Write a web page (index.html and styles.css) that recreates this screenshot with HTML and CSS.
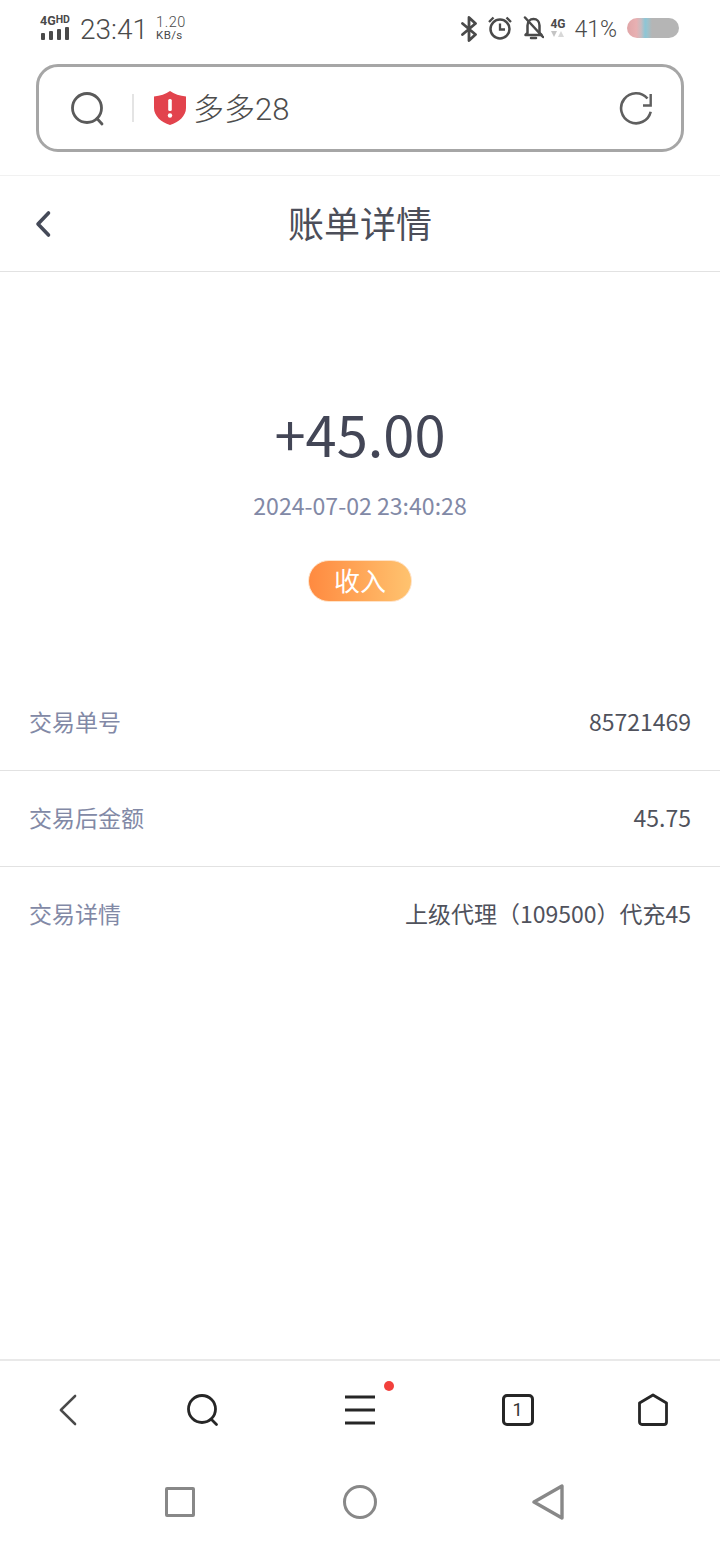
FILE: index.html
```html
<!DOCTYPE html>
<html lang="zh-CN">
<head>
    <meta charset="UTF-8">
    <meta name="viewport" content="width=device-width, initial-scale=1.0">
    <title>账单详情</title>
    <link rel="stylesheet" href="styles.css">
</head>
<body>
    <div class="phone">
        <!-- system status bar -->
        <div class="status-bar">
            <div class="signal">
                <div class="signal-type">4G<span>HD</span></div>
                <div class="signal-bars"><i class="b1"></i><i class="b2"></i><i class="b3"></i><i class="b4"></i></div>
            </div>
            <div class="clock">23:41</div>
            <div class="speed"><span>1.20</span><span class="speed-unit">KB/s</span></div>
            <div class="status-right">
                <svg class="ic-bt" width="18" height="26" viewBox="0 0 18 26" fill="none" stroke="#4a4a4a" stroke-width="2.800" stroke-linejoin="round" stroke-linecap="round"><path d="M2.500 7.500 15.500 18.500 9 24.500V1.500l6.500 6L2.500 18.500"/></svg>
                <svg class="ic-alarm" width="24" height="24" viewBox="0 0 24 24" fill="none" stroke="#4a4a4a" stroke-width="2.500"><circle cx="12" cy="13" r="9.500"/><path d="M12 7.500V13.500H17" stroke-width="2.300"/><path d="M1 6 5.500 1.500M23 6 18.500 1.500" stroke-width="2.300"/></svg>
                <svg class="ic-bell" width="21" height="24" viewBox="0 0 21 24" fill="none" stroke="#4a4a4a" stroke-width="2.500" stroke-linejoin="round"><path d="M4.500 17V9.500C4.500 5.500 7 3 10.500 3s6 2.500 6 6.500V17l2 2H2.500z"/><path d="M8 22h5" stroke-linecap="round"/><path d="M2 1.500 20 21" stroke-linecap="round"/></svg>
                <div class="net">
                    <div class="net-type">4G</div>
                    <svg width="13" height="7" viewBox="0 0 13 7"><path d="M0 0h6L3 6z" fill="#c4c4c4"/><path d="M7 6h6l-3-6z" fill="#d8d8d8"/></svg>
                </div>
                <div class="battery-text">41%</div>
                <div class="battery"></div>
            </div>
        </div>

        <!-- browser address bar -->
        <div class="address-wrap">
            <div class="address">
                <svg class="addr-search" width="34" height="34" viewBox="0 0 34 34" fill="none" stroke="#5a5a5a" stroke-width="2.800" stroke-linecap="round"><circle cx="16" cy="16" r="14.500"/><path d="M26 26.500 31 32"/></svg>
                <div class="addr-sep"></div>
                <svg class="addr-shield" width="32" height="34" viewBox="0 0 32 34"><path d="M16 0 C20 3 26 5 32 5.500V17C32 25 25 31 16 34 7 31 0 25 0 17V5.500C6 5 12 3 16 0z" fill="#e2434d"/><rect x="14.200" y="8" width="3.600" height="12" rx="1.500" fill="#fff"/><circle cx="16" cy="24.500" r="2.200" fill="#fff"/></svg>
                <div class="addr-text">多多28</div>
                <svg class="addr-refresh" width="34" height="34" viewBox="0 0 34 34" fill="none" stroke="#5f5f5f" stroke-width="2.600"><path d="M32.700 20.700A15 15 0 1 1 29.500 7.500"/><path d="M32.700 3V14.500H25" stroke-width="2.400"/></svg>
            </div>
        </div>

        <!-- page header -->
        <div class="page-head">
            <svg class="head-back" width="20" height="30" viewBox="0 0 20 30" fill="none" stroke="#454a58" stroke-width="3.600" stroke-linecap="round" stroke-linejoin="round"><path d="M16.500 4 6 15l10.500 11"/></svg>
            <h1 class="head-title">账单详情</h1>
        </div>

        <div class="summary">
            <div class="amount">+45.00</div>
            <div class="date">2024-07-02 23:40:28</div>
            <div class="tag">收入</div>
        </div>

        <div class="details">
            <div class="row"><span class="row-label">交易单号</span><span class="row-value">85721469</span></div>
            <div class="row"><span class="row-label">交易后金额</span><span class="row-value">45.75</span></div>
            <div class="row"><span class="row-label">交易详情</span><span class="row-value">上级代理（109500）代充45</span></div>
        </div>

        <!-- browser toolbar -->
        <div class="toolbar">
            <div class="tool">
                <svg width="22" height="32" viewBox="0 0 22 32" fill="none" stroke="#4a4a4a" stroke-width="2.600" stroke-linecap="round" stroke-linejoin="round"><path d="M18 2 3 16l15 14" transform="translate(1 0) scale(.95 1)"/></svg>
            </div>
            <div class="tool">
                <svg width="34" height="34" viewBox="0 0 34 34" fill="none" stroke="#262626" stroke-width="2.800" stroke-linecap="round"><circle cx="16" cy="16" r="13.500"/><path d="M25.500 26.500 30.500 31.500"/></svg>
            </div>
            <div class="tool tool-menu">
                <svg width="32" height="30" viewBox="0 0 32 30" fill="none" stroke="#262626" stroke-width="2.800"><path d="M1 2h30M1 15h30M1 28h30"/></svg>
                <span class="dot"></span>
            </div>
            <div class="tool">
                <div class="tab-count">1</div>
            </div>
            <div class="tool">
                <svg width="32" height="34" viewBox="0 0 32 34" fill="none" stroke="#262626" stroke-width="2.800" stroke-linejoin="round"><path d="M16 2 29.500 10V29a2.500 2.500 0 0 1-2.500 2.500H5A2.500 2.500 0 0 1 2.500 29V10z"/></svg>
            </div>
        </div>

        <!-- system navigation -->
        <div class="sys-nav">
            <div class="sys-btn"><div class="sys-square"></div></div>
            <div class="sys-btn"><div class="sys-circle"></div></div>
            <div class="sys-btn">
                <svg width="32" height="36" viewBox="0 0 32 36" fill="none" stroke="#888" stroke-width="3.400" stroke-linejoin="round"><path d="M2 18 30 2V34z"/></svg>
            </div>
        </div>
    </div>
</body>
</html>
```

FILE: styles.css
```css
* {
    box-sizing: border-box;
}

body {
    margin: 0;
    padding: 0;
    background-color: #fff;
    font-family: "Noto Sans CJK SC", "Noto Sans", sans-serif;
}

.phone {
    width: 720px;
    height: 1544px;
    display: flex;
    flex-direction: column;
    overflow: hidden;
    background-color: #fff;
}

/* status bar */
.status-bar {
    height: 64px;
    padding: 12px 41px 0 41px;
    display: flex;
    align-items: flex-start;
    color: #4a4a4a;
    font-family: Roboto, sans-serif;
}

.signal {
    width: 30px;
    height: 26px;
    margin-top: 2px;
}

.signal-type {
    font-size: 12.500px;
    line-height: 12px;
    font-weight: 700;
    white-space: nowrap;
    margin-left: -1px;
}

.signal-type span {
    font-size: 10.500px;
    vertical-align: 2px;
}

.signal-bars {
    display: flex;
    align-items: flex-end;
    gap: 4px;
    height: 13px;
}

.signal-bars i {
    display: block;
    width: 4px;
    border-radius: 1px;
    background-color: #4a4a4a;
}

.b1 { height: 7px; }
.b2 { height: 9px; }
.b3 { height: 11px; }
.b4 { height: 13px; }

.clock {
    margin-left: 9px;
    font-size: 28px;
    line-height: 36px;
    font-weight: 300;
}

.speed {
    margin-left: 8px;
    margin-top: 4px;
    display: flex;
    flex-direction: column;
    font-size: 14.500px;
    line-height: 14px;
    letter-spacing: .6px;
    font-weight: 300;
}

.speed-unit {
    font-size: 11.500px;
    line-height: 11px;
    letter-spacing: .4px;
    font-weight: 400;
}

.status-right {
    margin-left: auto;
    display: flex;
    align-items: center;
    height: 34px;
}

.ic-alarm {
    margin-left: 10px;
    margin-top: -3px;
}

.ic-bell {
    margin-left: 11px;
    margin-top: -2px;
}

.net {
    margin-left: 5px;
    width: 17px;
    display: flex;
    flex-direction: column;
    align-items: center;
    margin-top: -4px;
}

.net-type {
    font-size: 12px;
    line-height: 14px;
    font-weight: 700;
}

.battery-text {
    margin-left: 8px;
    margin-top: 2px;
    font-size: 23px;
    line-height: 34px;
    font-weight: 300;
}

.battery {
    margin-left: 10px;
    width: 52px;
    height: 20px;
    margin-top: -2px;
    border-radius: 10px;
    background: linear-gradient(90deg, #e0a6a8 0%, #e8b0b2 18%, #c9bcc0 27%, #8cc6d6 35%, #9cc2cc 40%, #b5b5b5 48%, #b5b5b5 100%);
}

/* address bar */
.address-wrap {
    height: 112px;
    padding: 0 36px;
    border-bottom: 1px solid #f1f1f1;
}

.address {
    height: 88px;
    padding: 0 29px 0 32px;
    display: flex;
    align-items: center;
    border: 3px solid #a6a6a6;
    border-radius: 22px;
}

.addr-search {
    margin-top: 2px;
}

.addr-sep {
    width: 2px;
    height: 28px;
    margin-left: 27px;
    background-color: #e4e4e4;
}

.addr-shield {
    margin-left: 20px;
}

.addr-text {
    margin-left: 7px;
    margin-top: 3px;
    font-family: Roboto, "Noto Sans CJK SC", sans-serif;
    font-size: 31px;
    line-height: 40px;
    font-weight: 300;
    color: #4c4c4c;
}

.addr-refresh {
    margin-left: auto;
}

/* page header */
.page-head {
    height: 96px;
    padding-bottom: 4px;
    display: flex;
    align-items: center;
    justify-content: center;
    position: relative;
    border-bottom: 1px solid #e2e2e2;
}

.head-back {
    position: absolute;
    left: 32px;
    top: 33px;
}

.head-title {
    margin: 0;
    font-size: 36px;
    line-height: 48px;
    font-weight: 400;
    color: #4c4e59;
}

/* amount block */
.summary {
    padding-top: 119px;
    display: flex;
    flex-direction: column;
    align-items: center;
}

.amount {
    font-size: 56px;
    line-height: 84px;
    color: #434656;
}

.date {
    margin-top: 13px;
    font-size: 23.100px;
    line-height: 34px;
    color: #8289a6;
}

.tag {
    margin-top: 38px;
    width: 104px;
    height: 42px;
    padding-bottom: 3px;
    display: flex;
    align-items: center;
    justify-content: center;
    border-radius: 21px;
    border: 1px solid #ffe3c8;
    background: linear-gradient(90deg, #ff8a40, #ffc36f);
    color: #fff;
    font-size: 26px;
}

/* detail rows */
.details {
    margin-top: 73px;
}

.row {
    height: 96px;
    padding: 0 29px 4px;
    display: flex;
    align-items: center;
    justify-content: space-between;
    border-bottom: 1px solid #e2e2e2;
    font-size: 23px;
}

.row:last-child {
    border-bottom: none;
}

.row-label {
    color: #8289a6;
}

.row-value {
    color: #50525c;
}

/* bottom toolbar */
.toolbar {
    margin-top: auto;
    height: 97px;
    padding-top: 2px;
    display: grid;
    grid-template-columns: 135px 135px 180px 135px 135px;
    border-top: 2px solid #e9e9e9;
}

.tool {
    display: flex;
    align-items: center;
    justify-content: center;
    position: relative;
}

.dot {
    position: absolute;
    left: 114px;
    top: 18px;
    width: 10px;
    height: 10px;
    border-radius: 50%;
    background-color: #f2403c;
}

.tab-count {
    width: 32px;
    height: 32px;
    display: flex;
    align-items: center;
    justify-content: center;
    border: 3px solid #262626;
    border-radius: 5px;
    font-family: Roboto, sans-serif;
    font-size: 18px;
    color: #333;
}

/* system nav */
.sys-nav {
    height: 88px;
    padding: 3px 0 0 90px;
    display: grid;
    grid-template-columns: 180px 180px 195px;
}

.sys-btn {
    height: 85px;
    display: flex;
    align-items: center;
    justify-content: center;
}

.sys-square {
    width: 30px;
    height: 30px;
    border: 3px solid #888;
    border-radius: 2px;
}

.sys-circle {
    width: 34px;
    height: 34px;
    border: 3px solid #888;
    border-radius: 50%;
}
```
